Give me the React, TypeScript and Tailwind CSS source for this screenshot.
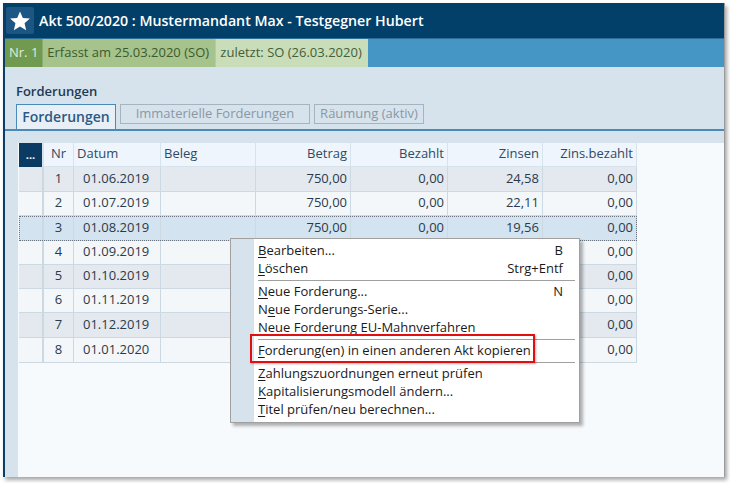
import React from 'react';

const rows = [
  { nr: 1, datum: '01.06.2019', betrag: '750,00', bezahlt: '0,00', zinsen: '24,58', zb: '0,00', tall: true },
  { nr: 2, datum: '01.07.2019', betrag: '750,00', bezahlt: '0,00', zinsen: '22,11', zb: '0,00', tall: false },
  { nr: 3, datum: '01.08.2019', betrag: '750,00', bezahlt: '0,00', zinsen: '19,56', zb: '0,00', tall: true },
  { nr: 4, datum: '01.09.2019', betrag: '750,00', bezahlt: '0,00', zinsen: '16,98', zb: '0,00', tall: false },
  { nr: 5, datum: '01.10.2019', betrag: '750,00', bezahlt: '0,00', zinsen: '14,48', zb: '0,00', tall: false },
  { nr: 6, datum: '01.11.2019', betrag: '750,00', bezahlt: '0,00', zinsen: '11,89', zb: '0,00', tall: false },
  { nr: 7, datum: '01.12.2019', betrag: '750,00', bezahlt: '0,00', zinsen: '9,38', zb: '0,00', tall: true },
  { nr: 8, datum: '01.01.2020', betrag: '750,00', bezahlt: '0,00', zinsen: '6,78', zb: '0,00', tall: true },
];

const cols = 'grid grid-cols-[23px_31px_87px_95px_95px_97px_95px_95px]';

function Star() {
  return (
    <svg width="22" height="22" viewBox="0 0 24 24">
      <path
        d="M12 1.5l3.1 7.1 7.7.7-5.8 5.1 1.7 7.6L12 18.1 5.3 22l1.7-7.6L1.2 9.3l7.7-.7z"
        fill="#ffffff"
      />
    </svg>
  );
}

type Item = { pre: string; key: string; post: string; sc?: string };

function MenuItem({ item }: { item: Item }) {
  return (
    <div className="flex h-[18px] items-center justify-between pl-[27px] pr-[16px]">
      <span>
        {item.pre}
        <span className="underline underline-offset-2">{item.key}</span>
        {item.post}
      </span>
      {item.sc && <span>{item.sc}</span>}
    </div>
  );
}

function Sep() {
  return <div className="ml-[27px] mr-[4px] my-[2px] h-px bg-[#a0a0a0]" />;
}

export default function App() {
  const group1: Item[] = [
    { pre: '', key: 'B', post: 'earbeiten...', sc: 'B' },
    { pre: '', key: 'L', post: 'öschen', sc: 'Strg+Entf' },
  ];
  const group2: Item[] = [
    { pre: '', key: 'N', post: 'eue Forderung...', sc: 'N' },
    { pre: 'N', key: 'e', post: 'ue Forderungs-Serie...' },
    { pre: 'Ne', key: 'u', post: 'e Forderung EU-Mahnverfahren' },
  ];
  const group4: Item[] = [
    { pre: '', key: 'Z', post: 'ahlungszuordnungen erneut prüfen' },
    { pre: '', key: 'K', post: 'apitalisierungsmodell ändern...' },
    { pre: '', key: 'T', post: 'itel prüfen/neu berechnen...' },
  ];

  return (
    <div
      className="relative h-[483px] w-[730px] overflow-hidden bg-white pl-[3px] pt-[3px] text-[13px]"
      style={{ fontFamily: '"Open Sans", "Liberation Sans", sans-serif' }}
    >
      <div className="flex h-[474px] w-[722px] flex-col border-l-2 border-r border-[#0b3d66] border-r-[#9a9a9a] shadow-[2px_3px_4px_rgba(0,0,0,0.35)]">
        {/* title bar */}
        <div className="flex h-[35px] items-center gap-[5px] bg-[#023f69] pl-[1px]">
          <div className="flex h-[27px] w-[28px] items-center justify-center rounded-[2px] bg-[#1c5683]">
            <Star />
          </div>
          <span className="text-[14.2px] font-semibold text-white">
            Akt 500/2020 : Mustermandant Max - Testgegner Hubert
          </span>
        </div>

        {/* status bar */}
        <div className="flex h-[29px] items-stretch border-t border-[#2c6d9a] bg-[#4595c5] text-[13px]">
          <div className="flex items-center bg-[#6f9a50] px-[4px] text-[#e3eddb]">Nr. 1</div>
          <div className="flex w-[173px] items-center border-l border-[#88ad6c] bg-[#a5c38b] px-[4px] text-[#3d5a2e]">
            Erfasst am 25.03.2020 (SO)
          </div>
          <div className="flex w-[153px] items-center border-l border-[#b5cca2] bg-[#c9ddb9] px-[4px] text-[#44603a]">
            zuletzt: SO (26.03.2020)
          </div>
        </div>

        {/* body */}
        <div className="flex flex-1 flex-col bg-[#d6e2ec]">
          <div className="pl-[11px] pt-[15px] text-[13px] font-semibold text-[#1d3a56]">Forderungen</div>
          <div className="mt-[2px] flex h-[27px] items-start gap-[4px] border-b-2 border-[#4a8ab8] pl-[11px]">
            <div className="flex h-[25px] w-[100px] items-center justify-center border border-b-0 border-[#4a8ab8] bg-[#e8eff6] text-[14px] font-semibold text-[#2a5a85]">
              Forderungen
            </div>
            <div className="flex h-[20px] w-[190px] items-center justify-center border border-[#a7b3bd] bg-[#d6e2ec] text-[#8a98a5]">
              Immaterielle Forderungen
            </div>
            <div className="flex h-[20px] w-[110px] items-center justify-center border border-[#a7b3bd] bg-[#d6e2ec] text-[#8a98a5]">
              Räumung (aktiv)
            </div>
          </div>

          <div className="mt-[12px] flex flex-1 pl-[13px]">
            <div className="flex-1 bg-[#f7fafd] pl-px">
              <div className="w-max">
                {/* header */}
                <div className={`${cols} h-[24px] text-[#2e4a66]`}>
                  <div className="flex items-center justify-center bg-[#0b3a63] text-[11px] font-bold leading-none text-white">...</div>
                  <div className="flex items-center justify-center border-l-2 border-b border-[#d6e2ec] bg-[#eef5fc]">Nr</div>
                  <div className="flex items-center border-l border-b border-[#d6e2ec] bg-[#eef5fc] pl-[3px]">Datum</div>
                  <div className="flex items-center border-l border-b border-[#d6e2ec] bg-[#eef5fc] pl-[3px]">Beleg</div>
                  <div className="flex items-center justify-end border-l border-b border-[#d6e2ec] bg-[#eef5fc] pr-[3px]">Betrag</div>
                  <div className="flex items-center justify-end border-l border-b border-[#d6e2ec] bg-[#eef5fc] pr-[3px]">Bezahlt</div>
                  <div className="flex items-center justify-end border-l border-b border-[#d6e2ec] bg-[#eef5fc] pr-[3px]">Zinsen</div>
                  <div className="flex items-center justify-end border-l border-r border-b border-[#d6e2ec] bg-[#eef5fc] pr-[3px]">Zins.bezahlt</div>
                </div>
                {rows.map((r) => {
                  const sel = r.nr === 3;
                  const bg = sel ? 'bg-[#d3e3ef]' : r.nr % 2 === 1 ? 'bg-[#e3e9ef]' : 'bg-[#f3f7fa]';
                  const cell = 'flex items-center border-l border-b border-[#ccd8e2]';
                  return (
                    <div
                      key={r.nr}
                      className={`${cols} ${r.tall ? 'h-[25px]' : 'h-[24px]'} text-[#2b3a4a] ${bg} ${sel ? 'outline-1 outline-dotted -outline-offset-1 outline-[#6a7480]' : ''}`}
                    >
                      <div className="border-b border-[#ccd8e2]" />
                      <div className={`${cell} justify-center border-l-2`}>{r.nr}</div>
                      <div className={`${cell} pl-[9px]`}>{r.datum}</div>
                      <div className={cell} />
                      <div className={`${cell} justify-end pr-[3px]`}>{r.betrag}</div>
                      <div className={`${cell} justify-end pr-[3px]`}>{r.bezahlt}</div>
                      <div className={`${cell} justify-end pr-[3px]`}>{r.zinsen}</div>
                      <div className={`${cell} justify-end border-r pr-[3px]`}>{r.zb}</div>
                    </div>
                  );
                })}
              </div>
            </div>
          </div>
        </div>
      </div>

      {/* context menu */}
      <div className="absolute left-[230px] top-[238px] w-[350px] border border-[#a0a0a0] bg-white py-[3px] text-[13px] text-[#1a1a1a] shadow-[3px_3px_3px_rgba(0,0,0,0.3)]">
        <div className="absolute bottom-0 left-0 top-0 w-[23px] bg-[#d6e2ec]" />
        <div className="relative">
          {group1.map((i) => (
            <MenuItem key={i.post} item={i} />
          ))}
          <Sep />
          {group2.map((i) => (
            <MenuItem key={i.post} item={i} />
          ))}
          <Sep />
          <MenuItem item={{ pre: '', key: 'F', post: 'orderung(en) in einen anderen Akt kopieren' }} />
          <Sep />
          {group4.map((i) => (
            <MenuItem key={i.post} item={i} />
          ))}
        </div>
      </div>
      <div className="absolute left-[250px] top-[334px] h-[29px] w-[285px] border-[2.5px] border-[#e01010] shadow-[1px_1px_2px_rgba(0,0,0,0.3)]" />
    </div>
  );
}
